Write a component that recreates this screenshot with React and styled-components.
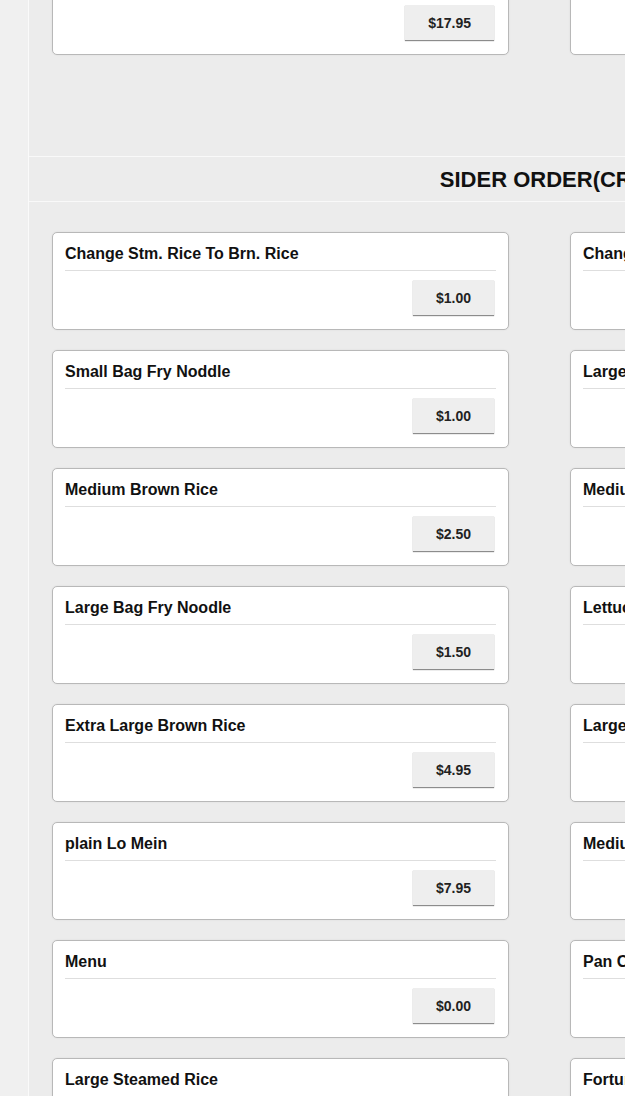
import React from "react";
import styled, { createGlobalStyle } from "styled-components";

const GlobalStyle = createGlobalStyle`
	html, body {
		margin: 0;
		padding: 0;
		overflow: hidden;
		background: #f0f0f0;
		font-family: "Liberation Sans", Arial, sans-serif;
		color: #111;
	}
`;

const Page = styled.div`
	display: flex;
	margin-top: -43px;
	width: 1052px;
`;

const Gutter = styled.div`
	flex: 0 0 28px;
	background: #f0f0f0;
	border-right: 1px solid #fafafa;
`;

const Main = styled.div`
	flex: 1;
	background: #ececec;
`;

const Section = styled.section`
	padding-bottom: 101px;
`;

const SectionTitle = styled.h2`
	margin: 0;
	height: 46px;
	box-sizing: border-box;
	padding: 2px 0 0 48px;
	display: flex;
	align-items: center;
	justify-content: center;
	font-size: 22px;
	font-weight: 700;
	border-top: 1px solid #f9f9f9;
	border-bottom: 1px solid #f9f9f9;
`;

const Grid = styled.div`
	display: grid;
	grid-template-columns: 457px 457px;
	column-gap: 61px;
	row-gap: 20px;
	padding: ${(p) => (p.$first ? "0" : "30px")} 23px 0;
`;

const Card = styled.div`
	background: #fff;
	border: 1px solid #b8b8b8;
	border-radius: 5px;
	box-shadow: 0 0 2px rgba(0, 0, 0, 0.08);
	padding: 0 12px 14px;
`;

const ItemName = styled.div`
	font-size: 16px;
	font-weight: 700;
	line-height: 20px;
	padding: 11px 0 6px;
	border-bottom: 1px solid #dedede;
	white-space: nowrap;
`;

const PriceRow = styled.div`
	display: flex;
	justify-content: flex-end;
	padding: 9px 2px 0 0;
`;

const PriceButton = styled.button`
	height: 35px;
	padding: 0 23px;
	border: none;
	background: #eeeeee;
	box-shadow: 0 1px 1px rgba(0, 0, 0, 0.45);
	font-family: "Liberation Sans", Arial, sans-serif;
	font-size: 14px;
	font-weight: 700;
	color: #222;
`;

const previous = [
	{ name: "Large Combination Fried Rice", price: "$17.95" },
	{ name: "Large Combination Lo Mein", price: "$17.95" },
];

const sides = [
	{ name: "Change Stm. Rice To Brn. Rice", price: "$1.00" },
	{ name: "Change Stm. Rice To Fry Rice", price: "$1.50" },
	{ name: "Small Bag Fry Noddle", price: "$1.00" },
	{ name: "Large Steamed Rice", price: "$2.50" },
	{ name: "Medium Brown Rice", price: "$2.50" },
	{ name: "Medium Steamed Rice", price: "$1.50" },
	{ name: "Large Bag Fry Noodle", price: "$1.50" },
	{ name: "Lettuce", price: "$0.50" },
	{ name: "Extra Large Brown Rice", price: "$4.95" },
	{ name: "Large Brown Rice", price: "$3.95" },
	{ name: "plain Lo Mein", price: "$7.95" },
	{ name: "Medium Fried Rice", price: "$4.95" },
	{ name: "Menu", price: "$0.00" },
	{ name: "Pan Cake", price: "$1.00" },
	{ name: "Large Steamed Rice", price: "$3.00" },
	{ name: "Fortune Cookie", price: "$0.25" },
];

function Item({ item }) {
	return (
		<Card>
			<ItemName>{item.name}</ItemName>
			<PriceRow>
				<PriceButton>{item.price}</PriceButton>
			</PriceRow>
		</Card>
	);
}

export default function App() {
	return (
		<>
			<GlobalStyle />
			<Page>
				<Gutter />
				<Main>
					<Section>
						<Grid $first>
							{previous.map((item, i) => (
								<Item key={i} item={item} />
							))}
						</Grid>
					</Section>
					<SectionTitle>SIDER ORDER(CREDIT)</SectionTitle>
					<Grid>
						{sides.map((item, i) => (
							<Item key={i} item={item} />
						))}
					</Grid>
				</Main>
			</Page>
		</>
	);
}
